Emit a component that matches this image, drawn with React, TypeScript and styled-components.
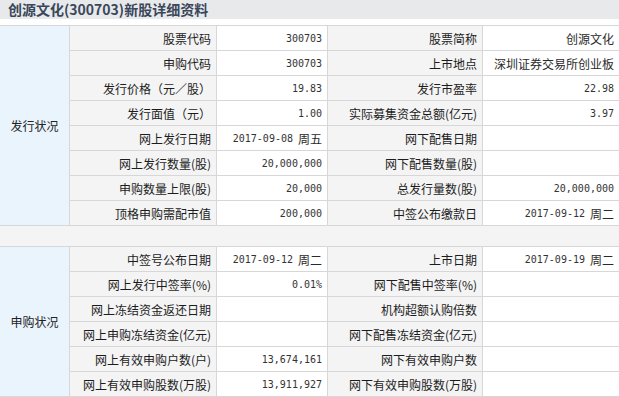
import { Fragment } from "react";
import styled, { createGlobalStyle } from "styled-components";

const GlobalStyle = createGlobalStyle`
  body {
    margin: 0;
    background: #fff;
    font-family: "Noto Sans CJK SC", "Liberation Sans", sans-serif;
  }
`;

const Page = styled.div`
  width: 619px;
  overflow: hidden;
`;

const TitleBar = styled.div`
  height: 19px;
  background: #e8e9eb;
  color: #3a475a;
  font-size: 14px;
  font-weight: bold;
  line-height: 19px;
  padding-left: 8px;
  white-space: nowrap;
  margin-bottom: 6px;
`;

const Sheet = styled.div`
  display: grid;
  grid-template-columns: 69px 146px 110px 154px 1fr;
  grid-template-rows: repeat(8, 24px) 20px repeat(6, 24px);
  gap: 1px;
  padding: 1px 0;
  background: #d7d7d7;
  font-size: 12px;
`;

interface SectionProps {
  start: number;
  span: number;
}

const SectionHead = styled.div<SectionProps>`
  grid-column: 1;
  grid-row: ${(p) => p.start} / span ${(p) => p.span};
  background: #eaf4fd;
  color: #222;
  display: flex;
  align-items: center;
  justify-content: center;
`;

const Label = styled.div`
  background: #f4f4f4;
  color: #1c1c1c;
  display: flex;
  align-items: center;
  justify-content: flex-end;
  padding-right: 5px;
  white-space: nowrap;
`;

const Value = styled.div`
  background: #fff;
  color: #2a2a2a;
  display: flex;
  align-items: center;
  justify-content: flex-end;
  padding-right: 5px;
  white-space: nowrap;
`;

const Num = styled.span`
  font-family: "DejaVu Sans Mono", "Liberation Mono", monospace;
  font-size: 10px;
  color: #333;
`;

const Week = styled.span`
  margin-left: 5px;
`;

const Spacer = styled.div`
  grid-column: 1 / -1;
  background: #f4f4f4;
`;

type Row = [string, string, string, string];

const issue: Row[] = [
  ["股票代码", "300703", "股票简称", "创源文化"],
  ["申购代码", "300703", "上市地点", "深圳证券交易所创业板"],
  ["发行价格（元／股）", "19.83", "发行市盈率", "22.98"],
  ["发行面值（元）", "1.00", "实际募集资金总额(亿元)", "3.97"],
  ["网上发行日期", "2017-09-08 周五", "网下配售日期", ""],
  ["网上发行数量(股)", "20,000,000", "网下配售数量(股)", ""],
  ["申购数量上限(股)", "20,000", "总发行量数(股)", "20,000,000"],
  ["顶格申购需配市值", "200,000", "中签公布缴款日", "2017-09-12 周二"],
];

const subscribe: Row[] = [
  ["中签号公布日期", "2017-09-12 周二", "上市日期", "2017-09-19 周二"],
  ["网上发行中签率(%)", "0.01%", "网下配售中签率(%)", ""],
  ["网上冻结资金返还日期", "", "机构超额认购倍数", ""],
  ["网上申购冻结资金(亿元)", "", "网下配售冻结资金(亿元)", ""],
  ["网上有效申购户数(户)", "13,674,161", "网下有效申购户数", ""],
  ["网上有效申购股数(万股)", "13,911,927", "网下有效申购股数(万股)", ""],
];

// digits in a mono face, a trailing weekday after a gap
function renderValue(v: string) {
  if (!v) return null;
  const [main, week] = v.split(" ");
  const content = /^[\x20-\x7e]+$/.test(main) ? <Num>{main}</Num> : main;
  return (
    <>
      {content}
      {week && <Week>{week}</Week>}
    </>
  );
}

function Rows({ rows }: { rows: Row[] }) {
  return (
    <>
      {rows.map((r, i) => (
        <Fragment key={i}>
          <Label>{r[0]}</Label>
          <Value>{renderValue(r[1])}</Value>
          <Label>{r[2]}</Label>
          <Value>{renderValue(r[3])}</Value>
        </Fragment>
      ))}
    </>
  );
}

export default function App() {
  return (
    <Page>
      <GlobalStyle />
      <TitleBar>创源文化(300703)新股详细资料</TitleBar>
      <Sheet>
        <SectionHead start={1} span={8}>发行状况</SectionHead>
        <Rows rows={issue} />
        <Spacer />
        <SectionHead start={10} span={6}>申购状况</SectionHead>
        <Rows rows={subscribe} />
      </Sheet>
    </Page>
  );
}
